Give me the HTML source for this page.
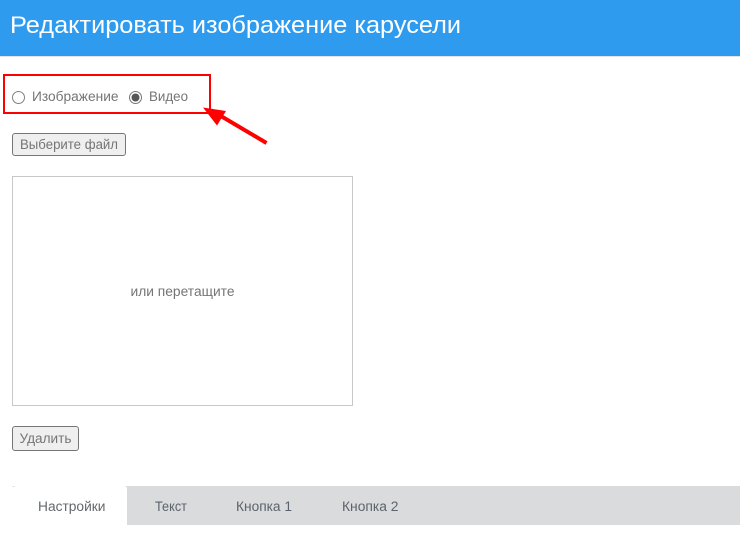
<!DOCTYPE html>
<html lang="ru">
<head>
<meta charset="utf-8">
<title>Редактировать изображение карусели</title>
<style>
html,body{margin:0;padding:0;background:#fff;width:740px;height:543px;overflow:hidden}
svg{display:block}
text{font-family:"Liberation Sans","DejaVu Sans",sans-serif}
</style>
</head>
<body>
<svg width="740" height="543" viewBox="0 0 740 543" xmlns="http://www.w3.org/2000/svg">
  <rect x="0" y="0" width="740" height="56" fill="#2f9bee"/>
  <rect x="0" y="56" width="740" height="1" fill="#e4e4e4"/>
  <text x="10" y="33" font-size="24.500" fill="#fff" textLength="451" lengthAdjust="spacingAndGlyphs">Редактировать изображение карусели</text>

  <circle cx="18.500" cy="97.500" r="6" fill="#fff" stroke="#808080" stroke-width="1"/>
  <text x="32" y="101" font-size="13.500" fill="#757575" textLength="86.500" lengthAdjust="spacingAndGlyphs">Изображение</text>
  <circle cx="135.500" cy="97.500" r="6" fill="#fff" stroke="#767676" stroke-width="1"/>
  <circle cx="135.500" cy="97.500" r="4" fill="#555"/>
  <text x="149" y="101" font-size="13.500" fill="#757575" textLength="39" lengthAdjust="spacingAndGlyphs">Видео</text>

  <rect x="4" y="75" width="206" height="38" fill="none" stroke="#f00" stroke-width="2"/>
  <path d="M266.500 143 L220 115.500" stroke="#f00" stroke-width="4" fill="none"/>
  <path d="M203 107.500 L226 111 L217 125.500 Z" fill="#f00"/>

  <rect x="12.500" y="133.500" width="113" height="22" rx="2.500" fill="#efefef" stroke="#767676"/>
  <text x="20" y="149" font-size="13.500" fill="#757575" textLength="98" lengthAdjust="spacingAndGlyphs">Выберите файл</text>

  <rect x="12.500" y="176.500" width="340" height="229" fill="#fff" stroke="#c8c8c8"/>
  <text x="130.500" y="296" font-size="13.500" fill="#757575" textLength="104" lengthAdjust="spacingAndGlyphs">или перетащите</text>

  <rect x="12.500" y="426.500" width="66" height="24" rx="2.500" fill="#efefef" stroke="#767676"/>
  <text x="19.500" y="443" font-size="13.500" fill="#757575" textLength="52" lengthAdjust="spacingAndGlyphs">Удалить</text>

  <rect x="12" y="486" width="728" height="39" fill="#dadbdd"/>
  <path d="M12 486 H124 Q127 486 127 489 V525 H12 Z" fill="#fff"/>
  <rect x="12" y="486" width="3" height="1" fill="#e6e6e6"/>
  <text x="38" y="511" font-size="13.500" fill="#64686d" textLength="67.500" lengthAdjust="spacingAndGlyphs">Настройки</text>
  <text x="155" y="511" font-size="13.500" fill="#5c636c" textLength="32" lengthAdjust="spacingAndGlyphs">Текст</text>
  <text x="236" y="511" font-size="13.500" fill="#5c636c" textLength="56" lengthAdjust="spacingAndGlyphs">Кнопка 1</text>
  <text x="342" y="511" font-size="13.500" fill="#5c636c" textLength="56.500" lengthAdjust="spacingAndGlyphs">Кнопка 2</text>
</svg>
</body>
</html>
